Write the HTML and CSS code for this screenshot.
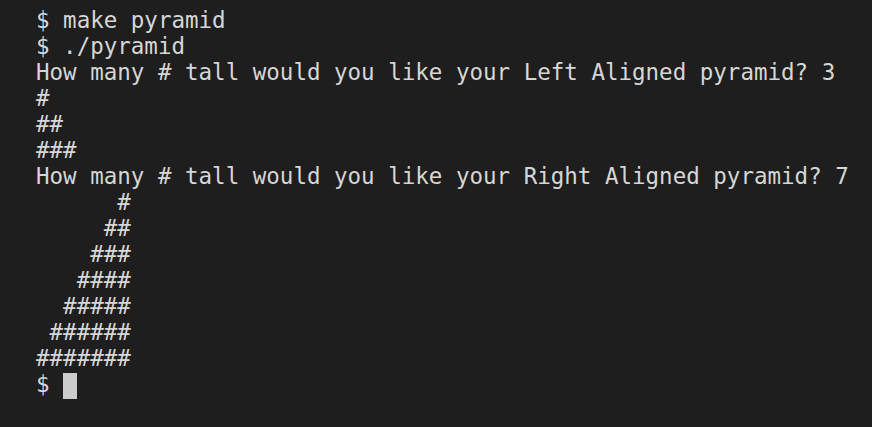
FILE: index.html
```html
<!DOCTYPE html>
<html>
<head>
<meta charset="utf-8">
<link rel="stylesheet" href="styles.css">
</head>
<body>
<pre class="term">$ make pyramid
$ ./pyramid
How many # tall would you like your Left Aligned pyramid? 3
#
##
###
How many # tall would you like your Right Aligned pyramid? 7
      #
     ##
    ###
   ####
  #####
 ######
#######
$ <span class="cursor"></span></pre>
</body>
</html>
```

FILE: styles.css
```css
html, body {
  margin: 0;
  padding: 0;
  background: #1e1e1e;
  height: 100%;
}
.term {
  margin: 0;
  padding: 7px 0 0 36px;
  font-family: "DejaVu Sans Mono", monospace;
  font-size: 22.5px;
  line-height: 26px;
  color: #d6d6d6;
  white-space: pre;
}
.cursor {
  display: inline-block;
  width: 13.5px;
  height: 26px;
  vertical-align: -7px;
  background: #cccccc;
}
```
